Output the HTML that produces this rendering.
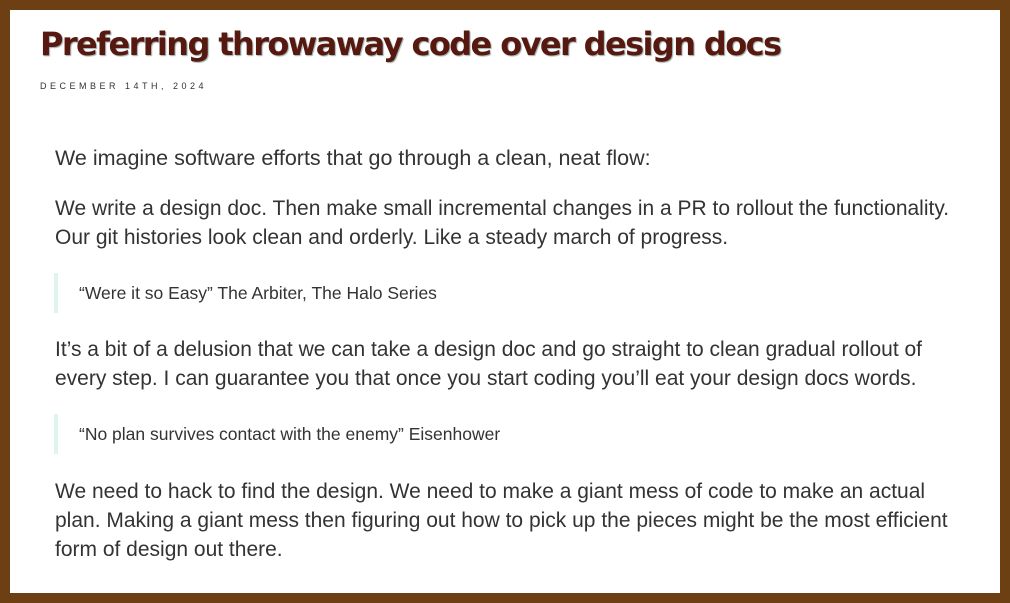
<!DOCTYPE html>
<html><head><meta charset="utf-8"><style>
html,body{margin:0;padding:0}
body{width:1010px;height:603px;background:#6d4014;overflow:hidden;font-family:"Liberation Sans",sans-serif}
.page{position:absolute;left:10px;top:10px;width:990px;height:583px;background:#fff;overflow:hidden}
h1{position:absolute;left:30px;top:15px;margin:0;font-family:"DejaVu Sans","Liberation Sans",sans-serif;font-weight:bold;font-size:32px;color:#56180f;letter-spacing:-1.6px;text-shadow:1px 1px 1px #9aa;white-space:nowrap}
.date{position:absolute;left:30px;top:71px;font-size:9px;letter-spacing:3.5px;color:#333;white-space:nowrap}
p{position:absolute;left:45px;margin:0;font-size:21px;line-height:29px;color:#333;white-space:nowrap}
.bq{position:absolute;left:44px;width:4px;height:40px;background:#dff4ea}
.q{position:absolute;left:69px;font-size:17.5px;color:#333;white-space:nowrap}
</style></head><body><div class="page">
<h1>Preferring throwaway code over design docs</h1>
<div class="date">DECEMBER 14TH, 2024</div>
<p style="top:134px;font-size:21.5px">We imagine software efforts that go through a clean, neat flow:</p>
<p style="top:184px">We write a design doc. Then make small incremental changes in a PR to rollout the functionality.<br>Our git histories look clean and orderly. Like a steady march of progress.</p>
<div class="bq" style="top:263px"></div>
<div class="q" style="top:273px">“Were it so Easy” The Arbiter, The Halo Series</div>
<p style="top:325px">It’s a bit of a delusion that we can take a design doc and go straight to clean gradual rollout of<br>every step. I can guarantee you that once you start coding you’ll eat your design docs words.</p>
<div class="bq" style="top:404px"></div>
<div class="q" style="top:414px">“No plan survives contact with the enemy” Eisenhower</div>
<p style="top:467px">We need to hack to find the design. We need to make a giant mess of code to make an actual<br>plan. Making a giant mess then figuring out how to pick up the pieces might be the most efficient<br>form of design out there.</p>
</div></body></html>
